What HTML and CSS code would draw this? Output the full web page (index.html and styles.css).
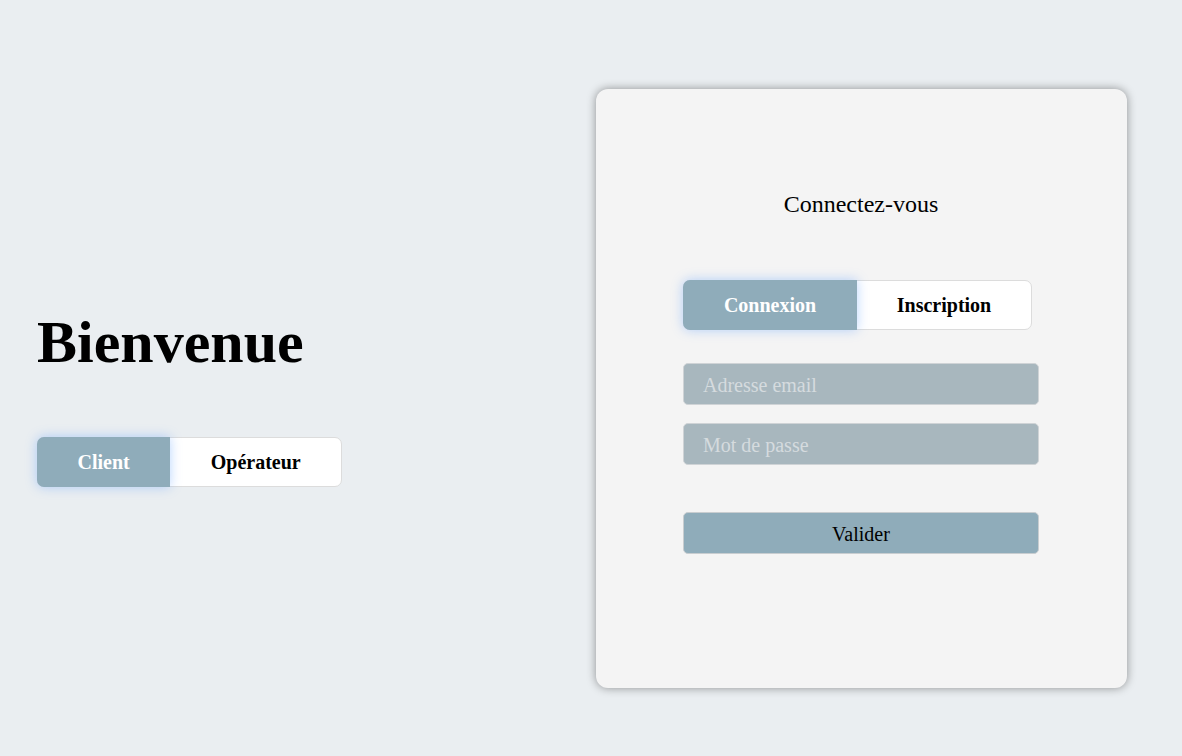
FILE: index.html
```html
<!DOCTYPE html>
<html lang="fr">
<head>
    <meta charset="UTF-8">
    <title>Bienvenue</title>
    <link rel="stylesheet" href="styles.css">
</head>
<body>
<div class="page">
    <div class="welcome">
        <h1>Bienvenue</h1>
        <div class="switch">
            <button class="active">Client</button>
            <button>Opérateur</button>
        </div>
    </div>
    <div class="card">
        <h2>Connectez-vous</h2>
        <div class="switch tabs">
            <button class="active">Connexion</button>
            <button>Inscription</button>
        </div>
        <form class="form">
            <input type="email" placeholder="Adresse email">
            <input type="password" placeholder="Mot de passe">
            <button type="button" class="submit">Valider</button>
        </form>
    </div>
</div>
</body>
</html>
```

FILE: styles.css
```css
* {
    margin: 0;
    padding: 0;
    box-sizing: border-box;
}
body {
    background: #eaeef1;
    font-family: "Liberation Serif", "Times New Roman", serif;
    color: #000;
}
.page {
    display: grid;
    grid-template-columns: 596px 531px;
    padding-top: 89px;
    height: 756px;
}
.welcome {
    padding: 219px 0 0 37px;
}
.welcome h1 {
    font-size: 60px;
    font-weight: bold;
    line-height: 68px;
    margin-bottom: 61px;
}
.switch {
    display: inline-flex;
    background: #fff;
    border: 1px solid #dcdcdc;
    border-radius: 7px;
    height: 50px;
}
.switch button {
    font-family: inherit;
    font-size: 20px;
    font-weight: bold;
    color: #000;
    background: transparent;
    border: none;
    padding: 1px 40.5px 0 40.5px;
    margin: -1px 0;
    cursor: pointer;
}
.switch button.active {
    position: relative;
    background: #8facba;
    color: #fff;
    margin-left: -1px;
    border-radius: 7px 0 0 7px;
    box-shadow: 0 0 12px rgba(80, 150, 255, 0.4);
}
.card {
    height: 599px;
    background: #f4f4f4;
    border-radius: 12px;
    box-shadow: 0 0 10px rgba(0, 0, 0, 0.4);
    padding: 101px 88px 0 87px;
}
.card h2 {
    font-size: 24px;
    font-weight: normal;
    text-align: center;
    line-height: 28px;
    margin-bottom: 62px;
}
.tabs {
    width: 349px;
}
.tabs button {
    flex: 1;
    padding: 1px 0 0 0;
}
.form {
    display: flex;
    flex-direction: column;
    gap: 18px;
    margin-top: 33px;
}
.form input {
    height: 42px;
    background: #a8b7be;
    border: 1px solid #cfd3d6;
    border-radius: 5px;
    padding: 2px 19px 0 19px;
    font-family: inherit;
    font-size: 20px;
    color: #000;
}
.form input::placeholder {
    color: #d5dbde;
}
.submit {
    height: 42px;
    margin-top: 29px;
    padding-top: 2px;
    background: #8facba;
    border: 1px solid #c8cdd0;
    border-radius: 5px;
    font-family: inherit;
    font-size: 20px;
    color: #000;
    cursor: pointer;
}
```
